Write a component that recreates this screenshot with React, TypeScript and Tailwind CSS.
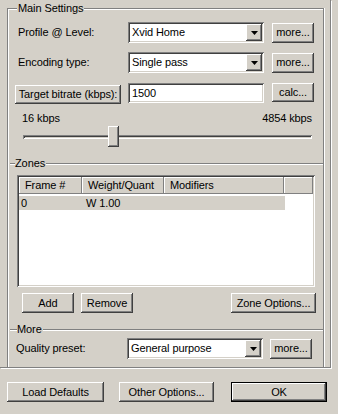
const raised =
  "bg-[#d4d0c8] shadow-[inset_-1px_-1px_0_#404040,inset_1px_1px_0_#ffffff,inset_-2px_-2px_0_#808080,inset_2px_2px_0_#d4d0c8]";
const sunken =
  "bg-white shadow-[inset_1px_1px_0_#808080,inset_-1px_-1px_0_#ffffff,inset_2px_2px_0_#404040,inset_-2px_-2px_0_#d4d0c8]";

function Button({ label, className = "" }: { label: string; className?: string }) {
  return (
    <div className={`${raised} flex shrink-0 items-center justify-center text-black ${className}`}>
      {label}
    </div>
  );
}

function Combo({ value, className = "" }: { value: string; className?: string }) {
  return (
    <div className={`${sunken} flex h-[21px] w-[136px] shrink-0 items-center ${className}`}>
      <span className="flex-1 pl-[4px]">{value}</span>
      <div className={`${raised} mr-[2px] flex h-[17px] w-[16px] items-center justify-center`}>
        <svg width="7" height="4" viewBox="0 0 7 4">
          <polygon points="0,0 7,0 3.5,4" fill="#000" />
        </svg>
      </div>
    </div>
  );
}

function Separator({ label, lead }: { label: string; lead: string }) {
  return (
    <div className="flex h-[13px] items-center">
      <div className={`ml-[2px] h-[2px] border-t border-t-[#808080] bg-white ${lead}`} />
      <span className="leading-[13px]">{label}</span>
      <div className="ml-[1px] h-[2px] flex-1 border-t border-t-[#808080] bg-white" />
    </div>
  );
}

const headerCell = "flex h-[17px] shrink-0 items-center pl-[6px] shadow-[inset_-1px_-1px_0_#808080,inset_1px_1px_0_#ffffff]";

export default function App() {
  return (
    <div className="h-[414px] w-[338px] overflow-hidden bg-[#d4d0c8] font-['Liberation_Sans',Arial,sans-serif] text-[11px] leading-[13px] tracking-[-0.1px] text-black">
      <div className="h-[368px] w-[331px] border-r border-b border-[#808080] pt-[8px] shadow-[1px_1px_0_#ffffff]">
        {/* Main Settings group */}
        <div className="ml-[7px] flex h-[359px] w-[317px] flex-col border-t border-l border-r border-[#808080] shadow-[inset_1px_1px_0_#ffffff,1px_0_0_#ffffff]">
          <span className="-mt-[7px] ml-[9px] w-fit bg-[#d4d0c8] px-[1px]">Main Settings</span>

          <div className="mt-[7px] flex h-[21px] items-center">
            <span className="ml-[10px] w-[110px] shrink-0">Profile @ Level:</span>
            <Combo value="Xvid Home" />
            <Button label="more..." className="ml-[8px] h-[20px] w-[42px]" />
          </div>

          <div className="mt-[9px] flex h-[21px] items-center">
            <span className="ml-[10px] w-[110px] shrink-0">Encoding type:</span>
            <Combo value="Single pass" />
            <Button label="more..." className="ml-[8px] h-[20px] w-[42px]" />
          </div>

          <div className="mt-[10px] flex h-[21px] items-start">
            <Button label="Target bitrate (kbps):" className="ml-[7px] mt-[2px] h-[19px] w-[106px]" />
            <div className={`${sunken} ml-[7px] flex h-[20px] w-[136px] shrink-0 items-center pl-[4px]`}>1500</div>
            <Button label="calc..." className="ml-[8px] h-[19px] w-[42px]" />
          </div>

          <div className="ml-[14px] mr-[11px] mt-[8px] flex justify-between">
            <span>16 kbps</span>
            <span>4854 kbps</span>
          </div>

          <div className="relative ml-[15px] mt-[1px] flex h-[21px] w-[289px] items-center">
            <div className="h-[4px] w-full bg-[#d4d0c8] shadow-[inset_1px_1px_0_#808080,inset_-1px_-1px_0_#ffffff,inset_2px_2px_0_#404040,inset_-2px_-2px_0_#d4d0c8]" />
            <div className={`${raised} absolute left-[85px] top-0 h-[21px] w-[11px]`} />
          </div>

          <div className="mt-[10px]">
            <Separator label="Zones" lead="w-[5px]" />
          </div>

          {/* Zones list */}
          <div className={`${sunken} ml-[9px] mt-[5px] h-[112px] w-[298px] p-[2px]`}>
            <div className="flex bg-[#d4d0c8]">
              <div className={`${headerCell} w-[63px]`}>Frame #</div>
              <div className={`${headerCell} w-[82px]`}>Weight/Quant</div>
              <div className={`${headerCell} w-[120px]`}>Modifiers</div>
              <div className={`${headerCell} flex-1`} />
            </div>
            <div className="mt-[2px] flex h-[14px] w-[266px] items-center bg-[#d4d0c8]">
              <span className="w-[63px] pl-[2px]">0</span>
              <span className="pl-[4px]">W 1.00</span>
            </div>
          </div>

          <div className="mt-[6px] flex h-[20px]">
            <Button label="Add" className="ml-[14px] h-[20px] w-[52px]" />
            <Button label="Remove" className="ml-[7px] h-[20px] w-[52px]" />
            <Button label="Zone Options..." className="ml-auto mr-[7px] h-[20px] w-[85px]" />
          </div>

          <div className="mt-[10px]">
            <Separator label="More" lead="w-[7px]" />
          </div>

          <div className="mt-[2px] flex h-[21px] items-center">
            <span className="ml-[8px] w-[111px] shrink-0">Quality preset:</span>
            <Combo value="General purpose" />
            <Button label="more..." className="ml-[7px] h-[20px] w-[42px]" />
          </div>
        </div>
      </div>

      <div className="mt-[14px] flex h-[20px]">
        <Button label="Load Defaults" className="ml-[7px] h-[20px] w-[97px]" />
        <Button label="Other Options..." className="ml-[15px] h-[20px] w-[95px]" />
        <div className="ml-[17px] h-[20px] w-[96px] border border-black">
          <Button label="OK" className="h-full w-full" />
        </div>
      </div>
    </div>
  );
}
